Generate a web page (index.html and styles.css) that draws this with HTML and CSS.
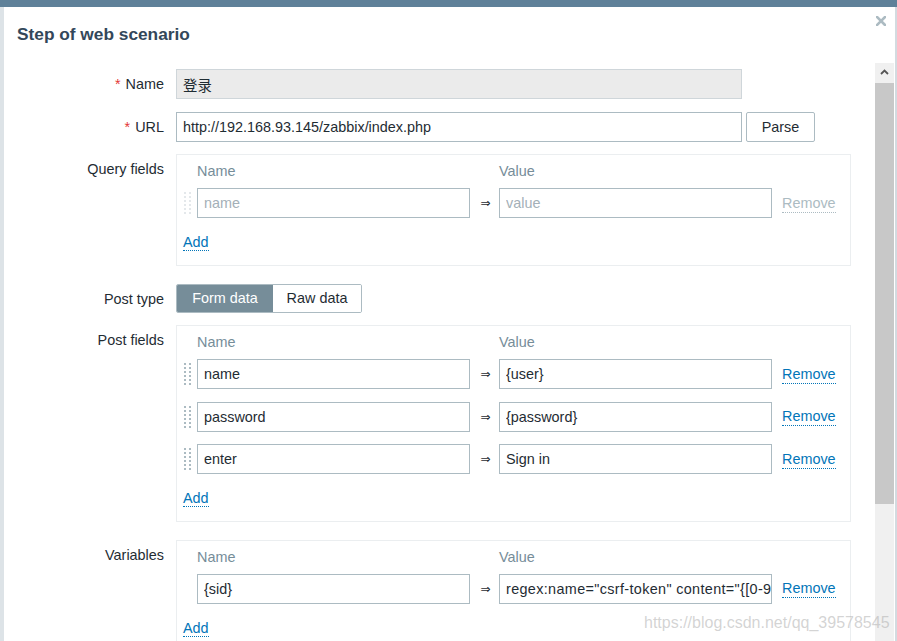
FILE: index.html
```html
<!DOCTYPE html>
<html lang="en">
<head>
<meta charset="utf-8">
<title>Step of web scenario</title>
<link rel="stylesheet" href="styles.css">
</head>
<body>
<div class="topbar"></div>
<div class="page">
  <div class="side-left"></div>
  <div class="dialog">
    <div class="dialog-header">
      <h4 class="title">Step of web scenario</h4>
      <button class="close" type="button" aria-label="Close">
        <svg width="10" height="10" viewBox="0 0 10 10"><path d="M1 1L9 9M9 1L1 9" stroke="#acbbc2" stroke-width="2.6" stroke-linecap="square" fill="none"/></svg>
      </button>
    </div>
    <div class="dialog-body">
      <div class="content">
        <ul class="form-list">
          <li class="row">
            <label class="label"><span class="req">*</span>Name</label>
            <input class="input wide readonly" type="text" value="登录" readonly>
          </li>
          <li class="row">
            <label class="label"><span class="req">*</span>URL</label>
            <input class="input wide" type="text" value="http://192.168.93.145/zabbix/index.php">
            <button class="btn" type="button">Parse</button>
          </li>
          <li class="row">
            <label class="label">Query fields</label>
            <div class="box">
              <div class="kv-head"><span></span><span>Name</span><span></span><span>Value</span></div>
              <div class="kv-rows">
                <div class="kv-row">
                  <svg class="handle disabled" width="7" height="22" viewBox="0 0 7 22"><path d="M0 0h2v2H0zM5 0h2v2H5zM0 4h2v2H0zM5 4h2v2H5zM0 8h2v2H0zM5 8h2v2H5zM0 12h2v2H0zM5 12h2v2H5zM0 16h2v2H0zM5 16h2v2H5zM0 20h2v2H0zM5 20h2v2H5z"/></svg>
                  <input class="input" type="text" placeholder="name">
                  <span class="arrow">⇒</span>
                  <input class="input" type="text" placeholder="value">
                  <a class="link disabled">Remove</a>
                </div>
              </div>
              <a class="link add">Add</a>
            </div>
          </li>
          <li class="row after-box">
            <label class="label">Post type</label>
            <div class="segmented">
              <span class="seg selected seg-form">Form data</span>
              <span class="seg seg-raw">Raw data</span>
            </div>
          </li>
          <li class="row">
            <label class="label">Post fields</label>
            <div class="box">
              <div class="kv-head"><span></span><span>Name</span><span></span><span>Value</span></div>
              <div class="kv-rows">
                <div class="kv-row">
                  <svg class="handle" width="7" height="22" viewBox="0 0 7 22"><path d="M0 0h2v2H0zM5 0h2v2H5zM0 4h2v2H0zM5 4h2v2H5zM0 8h2v2H0zM5 8h2v2H5zM0 12h2v2H0zM5 12h2v2H5zM0 16h2v2H0zM5 16h2v2H5zM0 20h2v2H0zM5 20h2v2H5z"/></svg>
                  <input class="input" type="text" value="name">
                  <span class="arrow">⇒</span>
                  <input class="input" type="text" value="{user}">
                  <a class="link">Remove</a>
                </div>
                <div class="kv-row">
                  <svg class="handle" width="7" height="22" viewBox="0 0 7 22"><path d="M0 0h2v2H0zM5 0h2v2H5zM0 4h2v2H0zM5 4h2v2H5zM0 8h2v2H0zM5 8h2v2H5zM0 12h2v2H0zM5 12h2v2H5zM0 16h2v2H0zM5 16h2v2H5zM0 20h2v2H0zM5 20h2v2H5z"/></svg>
                  <input class="input" type="text" value="password">
                  <span class="arrow">⇒</span>
                  <input class="input" type="text" value="{password}">
                  <a class="link">Remove</a>
                </div>
                <div class="kv-row">
                  <svg class="handle" width="7" height="22" viewBox="0 0 7 22"><path d="M0 0h2v2H0zM5 0h2v2H5zM0 4h2v2H0zM5 4h2v2H5zM0 8h2v2H0zM5 8h2v2H5zM0 12h2v2H0zM5 12h2v2H5zM0 16h2v2H0zM5 16h2v2H5zM0 20h2v2H0zM5 20h2v2H5z"/></svg>
                  <input class="input" type="text" value="enter">
                  <span class="arrow">⇒</span>
                  <input class="input" type="text" value="Sign in">
                  <a class="link">Remove</a>
                </div>
              </div>
              <a class="link add">Add</a>
            </div>
          </li>
          <li class="row after-box">
            <label class="label">Variables</label>
            <div class="box">
              <div class="kv-head"><span></span><span>Name</span><span></span><span>Value</span></div>
              <div class="kv-rows">
                <div class="kv-row">
                  <span></span>
                  <input class="input" type="text" value="{sid}">
                  <span class="arrow">⇒</span>
                  <input class="input clip" type="text" value="regex:name=&quot;csrf-token&quot; content=&quot;{[0-9a-z]{32}}&quot;">
                  <a class="link">Remove</a>
                </div>
              </div>
              <a class="link add">Add</a>
            </div>
          </li>
        </ul>
      </div>
      <div class="scrollbar">
        <div class="sb-up">
          <svg width="9" height="6" viewBox="0 0 9 6"><path d="M1 5L4.5 1.5L8 5" stroke="#555" stroke-width="1.8" fill="none"/></svg>
        </div>
        <div class="sb-thumb"></div>
      </div>
    </div>
  </div>
  <div class="side-right"></div>
</div>
<div class="watermark">https://blog.csdn.net/qq_39578545</div>
</body>
</html>
```

FILE: styles.css
```css
* { box-sizing: border-box; }

html, body {
  margin: 0;
  height: 100%;
}

body {
  display: flex;
  flex-direction: column;
  overflow: hidden;
  background: #dfe4e7;
  font-family: "Liberation Sans", Arial, "Noto Sans CJK SC", sans-serif;
  font-size: 14.4px;
  line-height: 18px;
  color: #1f2c33;
}

.topbar {
  height: 7px;
  flex: none;
  background: #5f8199;
}

.page {
  flex: 1;
  min-height: 0;
  display: flex;
}

.side-left {
  width: 4px;
  flex: none;
  background: #dde3e7;
}

.side-right {
  width: 2px;
  flex: none;
  background: #d3dbe0;
}

.dialog {
  flex: 1;
  min-width: 0;
  display: flex;
  flex-direction: column;
  background: #fff;
}

.dialog-header {
  height: 56px;
  flex: none;
  display: flex;
  justify-content: space-between;
  align-items: flex-start;
  padding: 9px 9px 0 13px;
}

.title {
  margin: 8px 0 0;
  font-size: 17.3px;
  line-height: 20px;
  font-weight: bold;
  color: #33475a;
}

.close {
  width: 10px;
  height: 10px;
  padding: 0;
  border: 0;
  background: none;
  display: block;
}

.close svg { display: block; }

.dialog-body {
  flex: 1;
  min-height: 0;
  display: flex;
}

.content {
  flex: 1;
  min-width: 0;
  overflow: hidden;
  padding-top: 6px;
}

.scrollbar {
  width: 19px;
  flex: none;
  margin-right: 1px;
  background: #f0f0f0;
  display: flex;
  flex-direction: column;
}

.sb-up {
  height: 20px;
  display: flex;
  align-items: center;
  justify-content: center;
  padding-bottom: 2px;
}

.sb-up svg { display: block; }

.sb-thumb {
  height: 421px;
  background: #c8c8c8;
}

.form-list {
  list-style: none;
  margin: 0;
  padding: 0;
  display: flex;
  flex-direction: column;
  gap: 12.5px;
}

.row {
  display: flex;
  align-items: flex-start;
}

.row.after-box { margin-top: 5px; }

.label {
  width: 160px;
  flex: none;
  margin-right: 12px;
  padding-top: 6px;
  text-align: right;
  color: #1f2c33;
}

.req {
  color: #e33734;
  margin-right: 5px;
}

.input {
  height: 30px;
  margin: 0;
  border: 1px solid #acbbc2;
  border-radius: 0;
  padding: 0 6px;
  background: #fff;
  font: inherit;
  color: #1f2c33;
  outline: none;
}

.input::placeholder { color: #a4b0b8; }

.input.wide { width: 566px; }

.input.readonly {
  background: #ebebeb;
  border-color: #cfd6da;
}

.input.clip {
  padding-right: 0;
  letter-spacing: 0.35px;
}

.btn {
  width: 69px;
  height: 30px;
  margin-left: 4px;
  border: 1px solid #acbbc2;
  border-radius: 2px;
  background: #fff;
  font: inherit;
  color: #1f2c33;
  padding: 0;
}

.box {
  width: 675px;
  flex: none;
  border: 1px solid #ebeef0;
  padding: 7px 0 12px 6px;
}

.kv-head,
.kv-row {
  display: grid;
  grid-template-columns: 14px 273px 29px 273px auto;
}

.kv-head { color: #768d99; }

.kv-rows {
  margin-top: 8px;
  display: flex;
  flex-direction: column;
  gap: 12.5px;
}

.kv-row { align-items: center; }

.kv-row .input { width: 273px; }

.handle {
  display: block;
  margin-left: 1px;
  fill: #acbbc2;
}

.handle.disabled { fill: #e4e8eb; }

.arrow {
  text-align: center;
  font-family: "DejaVu Sans", sans-serif;
  font-size: 12px;
  color: #1f2c33;
  padding-left: 2px;
}

.link {
  justify-self: start;
  color: #0275b8;
  border-bottom: 1px dotted #0275b8;
  text-decoration: none;
  cursor: pointer;
}

.kv-row .link { margin-left: 10px; }

.link.disabled {
  color: #acbbc2;
  border-bottom-color: #acbbc2;
}

.add {
  display: inline-block;
  margin-top: 16px;
  line-height: 16px;
  margin-bottom: 2px;
}

.segmented {
  display: flex;
  height: 29px;
  border: 1px solid #acbbc2;
  border-radius: 2px;
  overflow: hidden;
}

.seg {
  display: flex;
  align-items: center;
  justify-content: center;
  color: #1f2c33;
  background: #fff;
}

.seg-form { width: 96px; }
.seg-raw { width: 88px; }

.seg.selected {
  background: #768d99;
  color: #fff;
}

.watermark {
  position: absolute;
  left: 644px;
  top: 614px;
  font-size: 16px;
  line-height: 18px;
  color: rgba(175, 175, 175, 0.55);
  white-space: nowrap;
  pointer-events: none;
}
```
